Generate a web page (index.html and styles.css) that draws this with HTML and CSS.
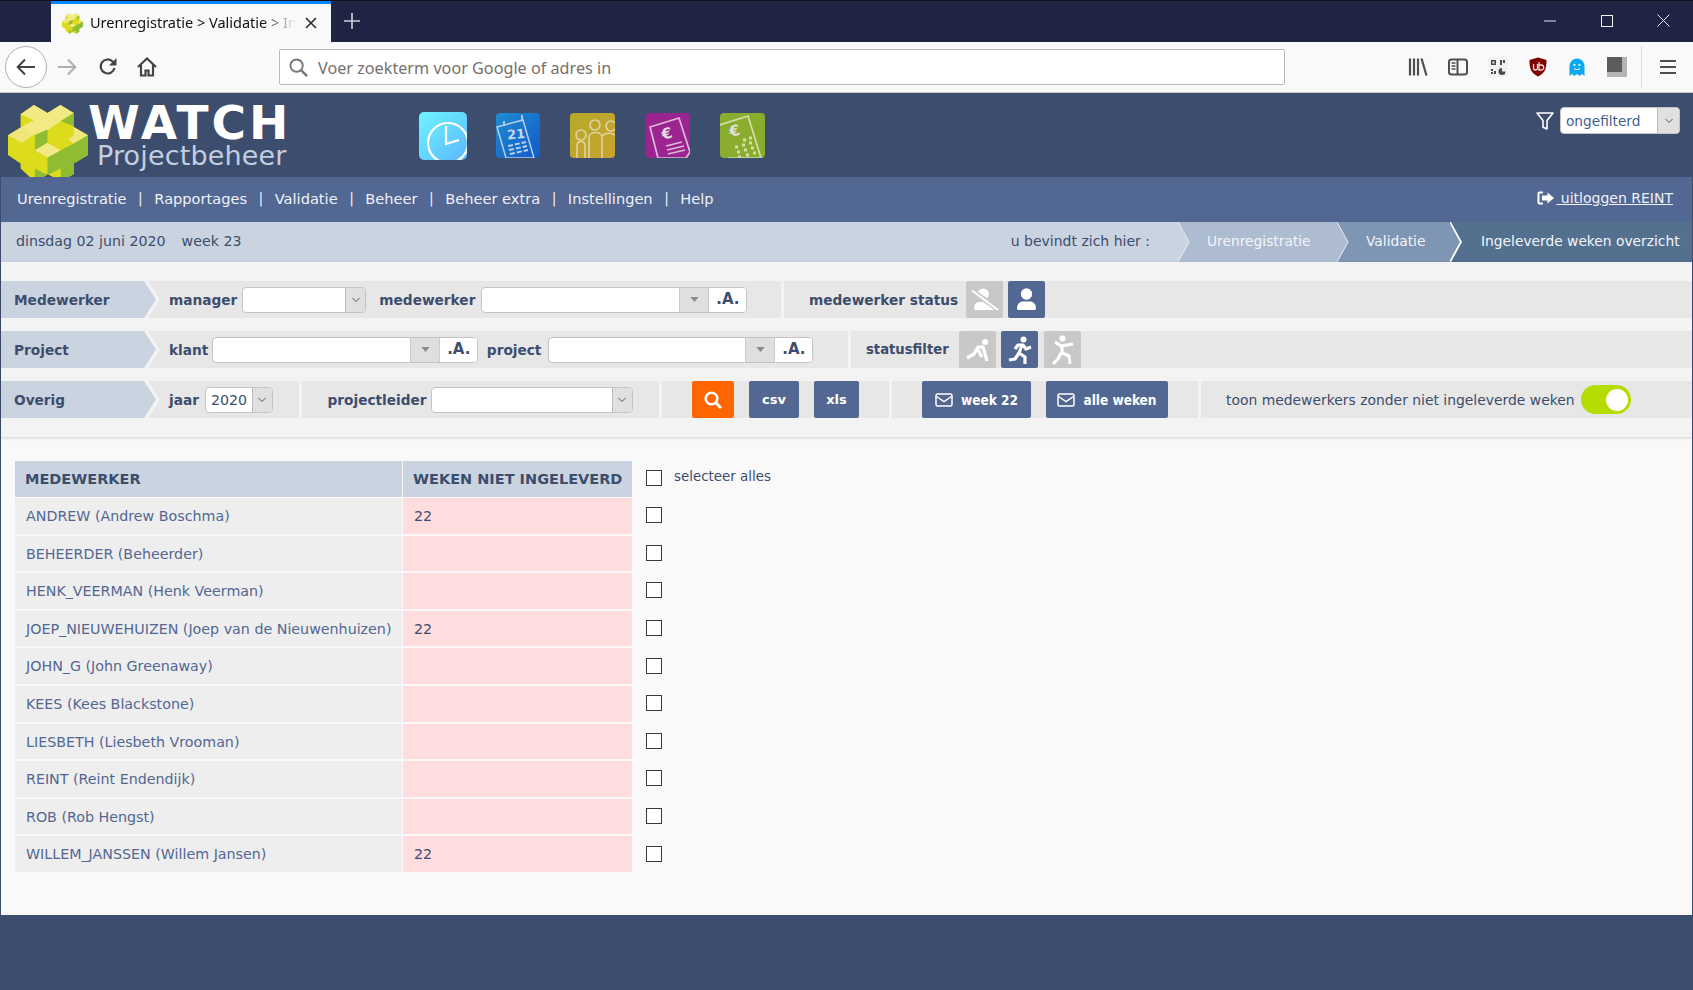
FILE: index.html
```html
<!DOCTYPE html>
<html lang="nl">
<head>
<meta charset="utf-8">
<title>Urenregistratie &gt; Validatie &gt; Ingeleverde weken overzicht</title>
<link rel="stylesheet" href="styles.css">
</head>
<body>
<svg class="defs" width="0" height="0" aria-hidden="true">
  <defs>
    <symbol id="chev" viewBox="0 0 10 6"><path d="M1.5 1 5 4.500 8.500 1" fill="none" stroke="#555" stroke-width="1"/></symbol>
    <symbol id="tri" viewBox="0 0 10 6"><path d="M0 0h10L5 6z" fill="#8a8a8a"/></symbol>
    <symbol id="mail" viewBox="0 0 18 14"><rect x="1" y="1" width="16" height="12" rx="1.500" fill="none" stroke="#fff" stroke-width="1.500"/><path d="M1.500 3.500 9 8.600l7.500-5.100" fill="none" stroke="#fff" stroke-width="1.500"/></symbol>
    <symbol id="box" viewBox="0 0 16 16"><rect x=".5" y=".5" width="15" height="15" fill="#fff" stroke="#3a3a3a"/></symbol>
    <symbol id="mark" viewBox="24 12 241 233">
      <path d="M62 42 102 14l41 24 39-24 40 24v42l43 25v60l-43 25v32l-39 23-40-23-38 23-43-40v-15l-38-25v-60l38-23z" fill="#dcdb1c"/>
      <path d="M62 42 102 14l41 24 39-24 40 24-39 24-40 28-43 15-38-23 40-22z" fill="#f2ea85"/>
      <path d="M24 105l38-23 38 23-35 23zM222 80l43 25-43 25-17-12 17-13z" fill="#f0e77a"/>
      <path d="M105 105l38-17v40l-38 22zM183 62l39-24v40zM183 150l39-20 43-25v60l-43 25v32l-39 23v-40l-40 20v-53zM105 205l38 20-38 20z" fill="#8fbc33"/>
      <path d="M105 150l38-22 40 22-40 22z" fill="#f2ea85"/>
    </symbol>
  </defs>
</svg>

<header class="titlebar">
  <div class="tab">
    <svg class="favicon"><use href="#mark"/></svg>
    <span class="tab-text">Urenregistratie &gt; Validatie &gt; Ingeleverde</span>
    <svg class="tab-close" viewBox="0 0 12 12"><path d="M1 1l10 10M11 1 1 11" stroke="#2b2b2b" stroke-width="1.600"/></svg>
  </div>
  <svg class="tab-new" viewBox="0 0 18 18"><path d="M9 1v16M1 9h16" stroke="#c9cad3" stroke-width="1.700"/></svg>
  <div class="winbtns">
    <svg class="win win-min" viewBox="0 0 12 12"><path d="M0 6h12" stroke="#e6e6ee" stroke-width="1"/></svg>
    <svg class="win win-max" viewBox="0 0 12 12"><rect x=".5" y=".5" width="11" height="11" fill="none" stroke="#f0f0f5"/></svg>
    <svg class="win win-close" viewBox="0 0 13 13"><path d="M.5.5l12 12M12.500.5l-12 12" stroke="#e6e6ee" stroke-width="1"/></svg>
  </div>
</header>

<div class="toolbar">
  <div class="back">
    <svg viewBox="0 0 20 18"><path d="M9 1.500 1.700 9 9 16.500M2 9h17" fill="none" stroke="#444" stroke-width="2"/></svg>
  </div>
  <svg class="tb-fwd" viewBox="0 0 20 18"><path d="M11 1.500 18.300 9 11 16.500M18 9H1" fill="none" stroke="#b0b0b3" stroke-width="2"/></svg>
  <svg class="tb-reload" viewBox="0 0 20 20"><path d="M16.500 11a7 7 0 1 1-1.700-6.300L17 7" fill="none" stroke="#444" stroke-width="2.200"/><path d="M18.500 1v7.500H11z" fill="#444"/></svg>
  <svg class="tb-home" viewBox="0 0 20 20"><path d="M1 10 10 1.500 19 10M4 8v10.500h4.500v-5h3v5H16V8" fill="none" stroke="#444" stroke-width="2.200"/></svg>
  <div class="urlbar">
    <svg class="url-search" viewBox="0 0 20 20"><circle cx="8" cy="8" r="6.500" fill="none" stroke="#777" stroke-width="2"/><path d="M12.500 12.500 19 19" stroke="#777" stroke-width="2.600"/></svg>
    <span class="url-text">Voer zoekterm voor Google of adres in</span>
  </div>
  <div class="tb-right">
    <svg class="tb-ico" viewBox="0 0 20 20"><path d="M2 1.500v17M6 1.500v17M10 1.500v17M13.500 1.500l5 17" stroke="#4e4e4e" stroke-width="2.200" fill="none"/></svg>
    <svg class="tb-ico" viewBox="0 0 20 20"><rect x="1" y="2.500" width="18" height="15" rx="2.500" fill="none" stroke="#4e4e4e" stroke-width="2"/><path d="M9.500 3v14" stroke="#4e4e4e" stroke-width="2"/><path d="M3.500 6h4M3.500 9h4M3.500 12h4" stroke="#4e4e4e" stroke-width="1.300"/></svg>
    <svg class="tb-ico" viewBox="0 0 20 20"><rect width="20" height="20" rx="1" fill="#f1f1f1"/><path d="M3 3h5v5H3zM12 3h2v5h-2zM15 3h2v3h-2zM3 12h2v2H3zM6 14h2v3H6zM3 15h2v2H3z" fill="#4a4a4a"/><rect x="4.500" y="4.500" width="2" height="2" fill="#f1f1f1"/><path d="M14 11a3.500 3.500 0 1 0 3.500 3.500H14z" fill="#4a4a4a"/></svg>
    <svg class="tb-ico" viewBox="0 0 20 20"><path d="M10 0.500 18.500 3c0 8-1 13-8.500 16.500C2.500 16 1.500 11 1.500 3z" fill="#800000"/><path d="M5.500 7v4a2 2 0 0 0 4 0V7M11 5v8h2.200a2.400 2.400 0 0 0 0-5H11" fill="none" stroke="#f3d9d9" stroke-width="1.300"/></svg>
    <svg class="tb-ico tb-ghost" viewBox="0 0 18 20"><path d="M1.500 9a7.500 7.500 0 0 1 15 0v10l-2.500-2-2.400 2-2.600-2-2.600 2-2.400-2-2.500 2z" fill="#0aa9f0"/><circle cx="6.500" cy="8" r="1.100" fill="#fff"/><circle cx="11.500" cy="8" r="1.100" fill="#fff"/><path d="M6 11.500c1.500 1.500 4.500 1.500 6 0" fill="none" stroke="#fff"/></svg>
    <svg class="tb-ico" viewBox="0 0 20 20"><rect width="20" height="20" fill="#b4b4b4"/><rect width="15" height="15" fill="#5c5c5c"/></svg>
    <span class="tb-sep"></span>
    <svg class="tb-burger" viewBox="0 0 16 16"><path d="M0 2h16M0 8h16M0 14h16" stroke="#4e4e4e" stroke-width="2.200"/></svg>
  </div>
</div>

<div class="app">
  <div class="masthead">
    <div class="brand">
      <svg class="logo-mark"><use href="#mark"/></svg>
      <div class="brand-text">
        <div class="brand-name">WATCH</div>
        <div class="brand-sub">Projectbeheer</div>
      </div>
    </div>
    <div class="apps">
      <svg class="app-ico app-clock" viewBox="0 0 48 48"><defs><linearGradient id="g1" x1="0" y1="0" x2="1" y2="1"><stop offset="0" stop-color="#6ff4ff"/><stop offset="1" stop-color="#5cb8fb"/></linearGradient><clipPath id="c1"><rect width="48" height="48" rx="5"/></clipPath></defs><g clip-path="url(#c1)"><rect width="48" height="48" fill="url(#g1)"/><circle cx="29" cy="31" r="20" fill="none" stroke="#fff" stroke-width="2.200"/><path d="M27 14v18l13-4" fill="none" stroke="#fff" stroke-width="2.200"/></g></svg>
      <svg class="app-ico" viewBox="0 0 44 45"><defs><linearGradient id="g2" x1="0" y1="0" x2="1" y2="1"><stop offset="0" stop-color="#1f8bd2"/><stop offset="1" stop-color="#125bc9"/></linearGradient><clipPath id="c2"><rect width="44" height="45" rx="4"/></clipPath></defs><g clip-path="url(#c2)"><rect width="44" height="45" fill="url(#g2)"/><path d="M1 14 27 7l11 38H10z" fill="none" stroke="#b9cfe6" stroke-width="1.500"/><path d="M8 8v5M26 2v6" stroke="#b9cfe6" stroke-width="1.800"/><text x="11" y="26" class="cal-num" transform="rotate(-5 18 22)">21</text><path d="M12 33l18-4M13 37l18-4M14 41l18-4" stroke="#b9cfe6" stroke-width="2" stroke-dasharray="5 2"/></g></svg>
      <svg class="app-ico app-people" viewBox="0 0 45 45"><defs><linearGradient id="g3" x1="0" y1="0" x2="1" y2="1"><stop offset="0" stop-color="#b5aa2a"/><stop offset="1" stop-color="#c9a22e"/></linearGradient><clipPath id="c3"><rect width="45" height="45" rx="4"/></clipPath></defs><g clip-path="url(#c3)"><rect width="45" height="45" fill="url(#g3)"/><g fill="none" stroke="#ddd2a0" stroke-width="1.700"><circle cx="11" cy="22" r="5"/><circle cx="25" cy="12" r="5"/><circle cx="41" cy="13" r="5"/><path d="M7 45V33c0-6 8-6 8 0v12M19 45V24c0-6 13-6 13 0v21M32 24c2-5 12-5 14 0"/></g></g></svg>
      <svg class="app-ico app-purple" viewBox="0 0 44 45"><defs><clipPath id="c4"><rect width="44" height="45" rx="4"/></clipPath></defs><g clip-path="url(#c4)"><rect width="44" height="45" fill="#9b2490"/><path d="M4 14 33 5l11 34-4 6H12z" fill="none" stroke="#d9bcd6" stroke-width="1.700"/><text x="16" y="26" class="euro" transform="rotate(-14 20 22)">€</text><path d="M20 33l16-4M21 37l17-4M22 41l17-4" stroke="#d9bcd6" stroke-width="1.500"/></g></svg>
      <svg class="app-ico app-green" viewBox="0 0 45 45"><defs><clipPath id="c5"><rect width="45" height="45" rx="4"/></clipPath></defs><g clip-path="url(#c5)"><rect width="45" height="45" fill="#8bad2d"/><path d="M0 12 28 3l13 42H8" fill="none" stroke="#d2deb0" stroke-width="1.700"/><text x="10" y="23" class="euro" transform="rotate(-14 14 20)">€</text><path d="M15 34h3M22 32h3M29 30h3M17 39h3M24 37h3M31 35h3M18 44h3M26 42h3M33 40h3M23 27h3M29 25h3" stroke="#d2deb0" stroke-width="3"/></g></svg>
    </div>
    <div class="unit-filter">
      <svg class="funnel" viewBox="0 0 18 18"><path d="M1 1h16l-6 7.500V17l-4-1.800V8.500z" fill="none" stroke="#fff" stroke-width="1.600" stroke-linejoin="round"/></svg>
      <div class="sel sel-unit"><span class="sel-val sel-blue">ongefilterd</span><span class="sel-arrow"><svg><use href="#chev"/></svg></span></div>
    </div>
  </div>

  <nav class="mainnav">
    <a>Urenregistratie</a><i>|</i><a>Rapportages</a><i>|</i><a>Validatie</a><i>|</i><a>Beheer</a><i>|</i><a>Beheer extra</a><i>|</i><a>Instellingen</a><i>|</i><a>Help</a>
    <a class="logout"><svg viewBox="0 0 18 14"><path d="M6 1.500H2.500a1 1 0 0 0-1 1v9a1 1 0 0 0 1 1H6" fill="none" stroke="#fff" stroke-width="2"/><path d="M10.500 1.500 17 7l-6.500 5.500V9.500H5v-5h5.500z" fill="#fff"/></svg><u> uitloggen REINT</u></a>
  </nav>

  <div class="crumbbar">
    <span class="today">dinsdag 02 juni 2020</span>
    <span class="weekno">week 23</span>
    <span class="here">u bevindt zich hier :</span>
    <svg class="csep" viewBox="0 0 12 40"><rect width="12" height="40" fill="#adbcd0"/><path d="M0 0 11 20 0 40z" fill="#cad4e0"/><path d="M0 0 11 20 0 40" fill="none" stroke="#e9eef4"/></svg>
    <span class="crumb c1">Urenregistratie</span>
    <svg class="csep" viewBox="0 0 12 40"><rect width="12" height="40" fill="#7e95b3"/><path d="M0 0 11 20 0 40z" fill="#adbcd0"/><path d="M0 0 11 20 0 40" fill="none" stroke="#e9eef4"/></svg>
    <span class="crumb c2">Validatie</span>
    <svg class="csep" viewBox="0 0 12 40"><rect width="12" height="40" fill="#54708f"/><path d="M0 0 11 20 0 40z" fill="#7e95b3"/><path d="M0 0 11 20 0 40" fill="none" stroke="#fff" stroke-width="1.800"/></svg>
    <span class="crumb c3">Ingeleverde weken overzicht</span>
  </div>

  <section class="filters">
    <div class="frow">
      <div class="flabel">Medewerker</div>
      <div class="fgroup fg-1a">
        <span class="lbl">manager</span>
        <div class="sel sel-mgr"><span class="sel-val"></span><span class="sel-arrow"><svg><use href="#chev"/></svg></span></div>
        <span class="lbl lbl-next">medewerker</span>
        <div class="combo combo-mw"><span class="sel-val"></span><span class="combo-arrow"><svg><use href="#tri"/></svg></span><span class="combo-a">.A.</span></div>
      </div>
      <div class="fgroup fg-rest fg-status">
        <span class="lbl">medewerker status</span>
        <span class="sq sq-off sq-first"><svg viewBox="0 0 37 37"><circle cx="17.300" cy="13" r="5.500" fill="#fff"/><path d="M9 29c-1 0-1-1-1-2 0-4 3-6 6-6h7c3 0 7 2 7 6 0 1 0 2-1 2z" fill="#fff"/><path d="M6 10 32 28" stroke="#c8c8c8" stroke-width="5.500"/><path d="M6 9.500 32 29" stroke="#fff" stroke-width="2"/></svg></span>
        <span class="sq sq-on"><svg viewBox="0 0 37 37"><circle cx="18.500" cy="13" r="5.700" fill="#fff"/><path d="M10.500 29c-1 0-1.500-.8-1.500-1.500C9 23 12 20.500 15 20.500h7c3 0 6 2.500 6 7 0 .7-.5 1.500-1.500 1.500z" fill="#fff"/></svg></span>
      </div>
    </div>
    <div class="frow">
      <div class="flabel">Project</div>
      <div class="fgroup fg-2a">
        <span class="lbl">klant</span>
        <div class="combo combo-kl"><span class="sel-val"></span><span class="combo-arrow"><svg><use href="#tri"/></svg></span><span class="combo-a">.A.</span></div>
        <span class="lbl lbl-project">project</span>
        <div class="combo combo-pr"><span class="sel-val"></span><span class="combo-arrow"><svg><use href="#tri"/></svg></span><span class="combo-a">.A.</span></div>
      </div>
      <div class="fgroup fg-rest fg-statf">
        <span class="lbl lbl-statf">statusfilter</span>
        <span class="sq sq-off sq-first2"><svg viewBox="0 0 37 37"><circle cx="26" cy="11" r="3" fill="#fff"/><g fill="none" stroke="#fff" stroke-width="3.200" stroke-linejoin="round"><path d="M8 27l7-4 4-7h5l4 14"/><path d="M18 17l5 9"/></g></svg></span>
        <span class="sq sq-on sq-mid"><svg viewBox="0 0 37 37"><circle cx="22.500" cy="8.500" r="3" fill="#fff"/><g fill="none" stroke="#fff" stroke-width="3.200" stroke-linejoin="round"><path d="M14 18l3-4 5 0 3 4 5-2"/><path d="M21 14l-3 8 6 4v7"/><path d="M18 22l-4 6-6 1"/></g></svg></span>
        <span class="sq sq-off sq-mid"><svg viewBox="0 0 37 37"><circle cx="18.500" cy="7.500" r="3" fill="#fff"/><g fill="none" stroke="#fff" stroke-width="3" stroke-linejoin="round"><path d="M11 11l6 4 12-2"/><path d="M18 14v8l7 3 1 8"/><path d="M17 22l-3 6-5 5"/></g></svg></span>
      </div>
    </div>
    <div class="frow">
      <div class="flabel">Overig</div>
      <div class="fgroup fg-3a">
        <span class="lbl">jaar</span>
        <div class="sel sel-jaar"><span class="sel-val">2020</span><span class="sel-arrow"><svg><use href="#chev"/></svg></span></div>
      </div>
      <div class="fgroup fg-3b">
        <span class="lbl">projectleider</span>
        <div class="sel sel-pl"><span class="sel-val"></span><span class="sel-arrow"><svg><use href="#chev"/></svg></span></div>
      </div>
      <div class="fgroup fg-3c">
        <a class="btn btn-search"><svg viewBox="0 0 18 18"><circle cx="7.500" cy="7.500" r="5.800" fill="none" stroke="#fff" stroke-width="2.600"/><path d="M11.500 11.500 17 17" stroke="#fff" stroke-width="3"/></svg></a>
        <a class="btn btn-csv">csv</a>
        <a class="btn btn-xls">xls</a>
      </div>
      <div class="fgroup fg-3d">
        <a class="btn btn-mail btn-w22"><svg><use href="#mail"/></svg>week 22</a>
        <a class="btn btn-mail btn-all"><svg><use href="#mail"/></svg>alle weken</a>
      </div>
      <div class="fgroup fg-rest fg-3e">
        <span class="toon">toon medewerkers zonder niet ingeleverde weken</span>
        <span class="toggle"><span class="knob"></span></span>
      </div>
    </div>
  </section>

  <main class="content">
    <div class="grid">
      <div class="th">MEDEWERKER</div><div class="th th2">WEKEN NIET INGELEVERD</div><div class="chk chk-head"><svg><use href="#box"/></svg><span>selecteer alles</span></div>
      <div class="td">ANDREW (Andrew Boschma)</div><div class="tw">22</div><div class="chk"><svg><use href="#box"/></svg></div>
      <div class="td">BEHEERDER (Beheerder)</div><div class="tw"></div><div class="chk"><svg><use href="#box"/></svg></div>
      <div class="td">HENK_VEERMAN (Henk Veerman)</div><div class="tw"></div><div class="chk"><svg><use href="#box"/></svg></div>
      <div class="td">JOEP_NIEUWEHUIZEN (Joep van de Nieuwenhuizen)</div><div class="tw">22</div><div class="chk"><svg><use href="#box"/></svg></div>
      <div class="td">JOHN_G (John Greenaway)</div><div class="tw"></div><div class="chk"><svg><use href="#box"/></svg></div>
      <div class="td">KEES (Kees Blackstone)</div><div class="tw"></div><div class="chk"><svg><use href="#box"/></svg></div>
      <div class="td">LIESBETH (Liesbeth Vrooman)</div><div class="tw"></div><div class="chk"><svg><use href="#box"/></svg></div>
      <div class="td">REINT (Reint Endendijk)</div><div class="tw"></div><div class="chk"><svg><use href="#box"/></svg></div>
      <div class="td">ROB (Rob Hengst)</div><div class="tw"></div><div class="chk"><svg><use href="#box"/></svg></div>
      <div class="td">WILLEM_JANSSEN (Willem Jansen)</div><div class="tw">22</div><div class="chk"><svg><use href="#box"/></svg></div>
    </div>
  </main>
  <footer class="appfoot"></footer>
</div>
</body>
</html>
```

FILE: styles.css
```css
* { box-sizing: border-box; }
html, body { margin: 0; height: 100%; }
body {
  width: 1693px; height: 990px; overflow: hidden;
  display: flex; flex-direction: column;
  font-family: "DejaVu Sans", sans-serif;
  font-size: 14.250px; color: #3d4d6d; background: #3d4d6d;
}
.defs { position: absolute; }

/* browser chrome */
.titlebar {
  height: 42px; flex: none; background: #1f2445; border-top: 1px solid #0e1020;
  display: flex; align-items: flex-end; padding-left: 51px;
  font-family: "Noto Sans", sans-serif;
}
.tab {
  width: 280px; height: 41px; background: #f9f9fa; border-top: 3px solid #0a84ff;
  display: flex; align-items: center; padding-left: 11px;
}
.favicon { width: 21px; height: 21px; flex: none; }
.tab-text {
  margin: -2px 0 0 7px; width: 208px; height: 20px; line-height: 20px; white-space: nowrap; overflow: hidden; font-size: 14.500px; color: #111; flex: none;
  -webkit-mask-image: linear-gradient(90deg, #000 172px, transparent 206px);
  mask-image: linear-gradient(90deg, #000 172px, transparent 206px);
}
.tab-close { width: 12px; height: 12px; margin-left: 7px; flex: none; }
.tab-new { width: 18px; height: 18px; margin: 0 0 12px 12px; }
.winbtns { margin-left: auto; display: flex; align-items: center; height: 41px; padding-right: 23px; }
.win { width: 12px; height: 12px; margin-top: -2px; }
.win-max { margin-left: 45px; }
.win-close { width: 13px; height: 13px; margin-left: 44px; }

.toolbar {
  height: 51px; flex: none; background: #f9f9fa; border-bottom: 1px solid #ccc;
  display: flex; align-items: center; padding-left: 5px;
  font-family: "Noto Sans", sans-serif;
}
.back {
  width: 42px; height: 42px; border-radius: 50%; border: 1px solid #b1b1b1; background: #fff;
  display: flex; align-items: center; justify-content: center; flex: none;
}
.back svg { width: 20px; height: 18px; }
.tb-fwd { width: 20px; height: 18px; margin-left: 10px; flex: none; }
.tb-reload { width: 20px; height: 20px; margin-left: 21px; flex: none; }
.tb-home { width: 20px; height: 20px; margin-left: 19px; flex: none; }
.urlbar {
  width: 1006px; height: 36px; margin-left: 122px; flex: none;
  background: #fff; border: 1px solid #b9b9b9; border-radius: 2px;
  display: flex; align-items: center; padding-left: 9px;
}
.url-search { width: 19px; height: 19px; flex: none; }
.url-text { margin: 2px 0 0 10px; font-size: 16.200px; color: #77706c; white-space: nowrap; }
.tb-right { margin-left: 123px; display: flex; align-items: center; }
.tb-ico { width: 20px; height: 20px; margin-right: 20px; flex: none; }
.tb-ghost { width: 18px; margin-right: 21px; }
.tb-sep { width: 1px; height: 42px; background: #dcdcdc; margin-left: -6px; }
.tb-burger { width: 16px; height: 16px; margin-left: 18px; }

/* application */
.app { flex: 1; display: flex; flex-direction: column; min-height: 0; padding: 0 1px; background: #3d4d6d; }
.masthead { height: 84px; flex: none; background: #3d4d6d; display: flex; padding-left: 7px; }
.brand { display: flex; width: 411px; }
.logo-mark { width: 80px; height: 78px; margin-top: 11px; flex: none; }
.brand-text { margin-left: 0; padding-top: 10px; }
.brand-name { font: bold 47px/40px "DejaVu Sans", sans-serif; color: #fff; letter-spacing: 3px; white-space: nowrap; }
.brand-sub { font: 27px/24px "DejaVu Sans", sans-serif; color: #c3cfe0; margin: 1px 0 0 9px; letter-spacing: .15px; white-space: nowrap; }
.apps { display: flex; gap: 30px; align-items: center; height: 84px; padding-top: 1px; }
.app-ico { width: 44px; height: 45px; flex: none; display: block; }
.app-clock { width: 48px; height: 48px; margin-right: -1px; }
.app-people { width: 45px; }
.app-purple { margin-left: 1px; }
.app-green { width: 45px; }
.cal-num { font: bold 13px "DejaVu Sans", sans-serif; fill: #c5d8ec; }
.euro { font: bold 15px "DejaVu Sans", sans-serif; fill: #e4e0e2; }
.unit-filter { margin-left: auto; display: flex; align-items: flex-start; padding: 14px 12px 0 0; }
.funnel { width: 18px; height: 18px; margin: 5px 6px 0 0; }

.mainnav {
  height: 45px; flex: none; background: #526792; color: #eef2f8;
  display: flex; align-items: center; padding: 0 19px 3px 16px; font-size: 14.600px;
}
.mainnav i { font-style: normal; margin: 0 11.500px; font-size: 14px; }
.logout { margin-left: auto; display: flex; align-items: center; white-space: pre; font-size: 14px; }
.logout svg { width: 18px; height: 14px; margin-right: 1px; }

.crumbbar {
  height: 40px; flex: none; background: #cad4e0; display: flex; align-items: center;
  padding-left: 15px; font-size: 14px; color: #3d4d6d;
}
.today { font-size: 14.200px; margin-top: -2px; }
.weekno { margin: -2px 0 0 16px; font-size: 14.200px; }
.here { margin: -2px 28px 0 auto; }
.csep { width: 12px; height: 40px; flex: none; display: block; }
.crumb { height: 40px; line-height: 38px; color: #f2f5f9; padding-left: 17px; white-space: nowrap; flex: none; font-size: 13.800px; }
.c1 { width: 147px; background: #adbcd0; }
.c2 { width: 101px; background: #7e95b3; }
.c3 { width: 230px; background: #54708f; padding-left: 19px; }

/* filters */
.filters {
  height: 175px; flex: none; background: #f3f3f3; padding-top: 19px; position: relative;
  box-shadow: 0 1px 3px rgba(0, 0, 0, .16); display: flex; flex-direction: column; gap: 13px;
}
.frow { height: 37px; display: flex; }
.flabel {
  width: 155px; flex: none; background: #cad4e0; padding-left: 13px;
  font: bold 13.700px/38px "DejaVu Sans", sans-serif; color: #3d4d6d;
  clip-path: polygon(0 0, 143px 0, 100% 50%, 143px 100%, 0 100%);
}
.fgroup {
  background: #e7e7e7; display: flex; align-items: center; flex: none; margin-left: 3px;
}
.flabel + .fgroup {
  margin-left: -8px; padding-left: 21px;
  clip-path: polygon(0 0, 100% 0, 100% 100%, 0 100%, 12px 50%);
}
.fg-1a { width: 633px; }
.fg-2a { width: 700px; }
.fg-3a { width: 151px; }
.fg-3b { width: 357px; padding-left: 25.500px; }
.fg-3c { width: 227px; padding-left: 30px; }
.fg-3d { width: 306px; padding-left: 30px; }
.fg-rest { flex: 1; }
.fg-status { padding-left: 25px; }
.fg-statf { padding-left: 15px; }
.fg-3e { padding-left: 25px; }

.lbl { font: bold 13.700px "DejaVu Sans", sans-serif; color: #3d4d6d; white-space: nowrap; }
.lbl-statf { font-size: 13.200px; }
.sel, .combo {
  height: 26px; background: #fff; border: 1px solid #c4c4c4; border-radius: 4px;
  display: flex; align-items: stretch; margin-left: 5px; flex: none; overflow: hidden;
}
.sel-val { flex: 1; padding-left: 5px; line-height: 24px; font-size: 14.200px; color: #3d4d6d; }
.sel-blue { color: #3f5f94; padding-left: 5px; font-size: 13.700px; line-height: 26px; }
.sel-arrow {
  width: 20px; flex: none; background: #e0e0e0; border-left: 1px solid #bdbdbd;
  display: flex; align-items: center; justify-content: center;
}
.sel-arrow svg { width: 10px; height: 6px; }
.sel-mgr { width: 124px; }
.sel-jaar { width: 68px; margin-left: 6px; }
.sel-pl { width: 202px; margin-left: 4px; }
.sel-unit { width: 120px; height: 27px; margin-left: 0; }
.sel-unit .sel-arrow { width: 22px; }
.lbl-next { margin-left: 13px; }
.lbl-project { margin-left: 8.500px; }
.combo-arrow {
  width: 29px; flex: none; background: #dfdfdf; border-left: 1px solid #ccc;
  display: flex; align-items: center; justify-content: center;
}
.combo-arrow svg { width: 9px; height: 5px; }
.combo-a {
  width: 38px; flex: none; background: #fff; border-left: 1px solid #ccc; text-align: center;
  font: bold 15px/23px "DejaVu Sans", sans-serif; color: #3d4d6d;
}
.combo-mw { width: 266px; margin-left: 6px; }
.combo-kl { width: 266px; margin-left: 4px; }
.combo-pr { width: 265px; margin-left: 7px; }

.sq { width: 37px; height: 37px; display: flex; align-items: center; justify-content: center; border-radius: 2px; flex: none; }
.sq svg { width: 37px; height: 37px; }
.sq-off { background: #c8c8c8; }
.sq-on { background: #526792; margin-left: 5px; }
.sq-first { margin-left: 8px; }
.sq-first2 { margin-left: 10px; }
.sq-mid { margin-left: 5px; }
.sq-off.sq-mid { margin-left: 6px; }

.btn {
  height: 37px; display: flex; align-items: center; justify-content: center; flex: none;
  background: #526792; color: #fff; border-radius: 2px;
  font: bold 13px "DejaVu Sans", sans-serif;
}
.btn-mail { font-family: "DejaVu Sans Condensed", "DejaVu Sans", sans-serif; font-stretch: condensed; font-size: 13.500px; }
.btn-search { width: 42px; background: #ff6600; }
.btn-search svg { width: 18px; height: 18px; }
.btn-csv { width: 50px; margin-left: 15px; }
.btn-xls { width: 45px; margin-left: 15px; }
.btn-mail svg { width: 18px; height: 14px; margin-right: 8px; flex: none; }
.btn-w22 { width: 109px; }
.btn-all { width: 122px; margin-left: 15px; }
.toon { font-size: 13.900px; color: #3d4d6d; white-space: nowrap; }
.toggle {
  width: 50px; height: 29px; border-radius: 15px; background: #b5dc00; margin-left: 6px; flex: none;
  display: flex; align-items: center; justify-content: flex-end; padding-right: 3px;
}
.knob { width: 22px; height: 22px; border-radius: 50%; background: #fff; }

/* table */
.content { flex: 1; min-height: 0; background: #f9f9f9; padding: 24px 0 0 14px; }
.grid {
  display: grid; grid-template-columns: 387px 229px auto; column-gap: 1px;
  grid-template-rows: 35px repeat(10, 35.600px); row-gap: 2px; width: 800px;
}
.th {
  height: 36px; align-self: start; background: #cad4e0; padding-left: 10px;
  font: bold 14.500px/36px "DejaVu Sans", sans-serif; color: #3d4d6d; white-space: nowrap;
}
.td { background: #eeeeee; padding-left: 11px; line-height: 36.500px; color: #526792; white-space: nowrap; overflow: hidden; }
.tw { background: #ffdcdd; padding-left: 11px; line-height: 36.500px; color: #3d4d6d; }
.chk { display: flex; align-items: center; padding: 0 0 1px 13px; }
.chk svg { width: 16px; height: 16px; flex: none; }
.chk-head { align-items: flex-start; padding-top: 9px; }
.chk-head span { margin-left: 12px; margin-top: -1px; font-size: 13.400px; color: #3d4d6d; }

.appfoot { height: 75px; flex: none; background: #3d4d6d; margin: 0 -1px; }
```
